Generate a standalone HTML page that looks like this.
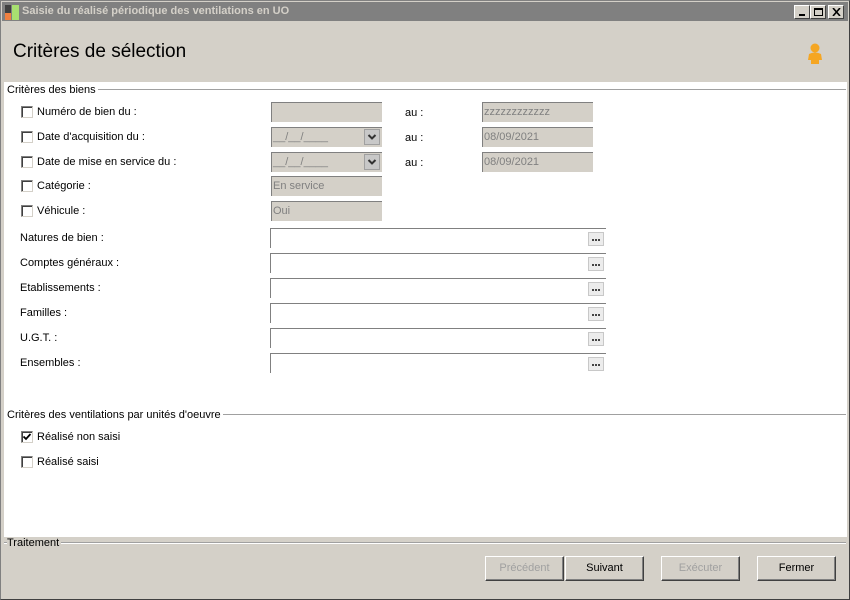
<!DOCTYPE html>
<html><head><meta charset="utf-8"><style>
*{box-sizing:border-box;margin:0;padding:0}
body{width:850px;height:600px;overflow:hidden;background:#d4d0c8;font-family:"Liberation Sans",sans-serif;font-size:11px;color:#000;position:relative}
.a{position:absolute}
.frame{left:0;top:0;width:850px;height:600px;border:1px solid #808080;border-right-color:#404040;border-bottom-color:#404040}
.tb{left:2px;top:2px;width:846px;height:19px;background:#808080;color:#d4d0c8;font-weight:bold;font-size:11px;line-height:19px;padding-left:20px}
.wb{top:5px;width:16px;height:14px;background:#d4d0c8;border:1px solid;border-color:#fff #404040 #404040 #fff}
.white{left:4px;top:82px;width:843px;height:455px;background:#fff}
.sec{font-size:11px;background:#fff;padding-right:2px}
.hl{height:2px;border-top:1px solid #a0a0a0;border-bottom:1px solid #fff}
.cb{width:12px;height:12px;border:1px solid #808080;border-right-color:#d4d0c8;border-bottom-color:#d4d0c8;background:#fff;box-shadow:inset 1px 1px 0 #404040}
.lbl{font-size:11px}
.in{height:20px;background:#d4d0c8;border-top:1px solid #808080;border-left:1px solid #808080;color:#808080;padding-left:1px;line-height:18px;font-size:11px}
.lk{height:20px;border-top:1px solid #808080;border-left:1px solid #808080;background:#fff}
.dots{width:16px;height:14px;border:1px solid #c8c8c8;background:#ececec}
.dots:after{content:"";position:absolute;left:3px;top:6px;width:2px;height:2px;background:#444;box-shadow:3px 0 0 #444,6px 0 0 #444}
.dd{width:16px;height:16px;background:#c8c8c8;border:1px solid #a0a0a0}
.btn{top:556px;width:79px;height:25px;background:#d4d0c8;border:1px solid;border-color:#fff #404040 #404040 #fff;box-shadow:inset -1px -1px 0 #808080;text-align:center;line-height:22px;font-size:11px}
</style></head><body>
<div class="a frame"></div>
<div class="a tb">Saisie du réalisé périodique des ventilations en UO</div>
<div class="a" style="left:5px;top:5px;width:6px;height:8px;background:#404040"></div>
<div class="a" style="left:5px;top:13px;width:6px;height:7px;background:#f08040"></div>
<div class="a" style="left:12px;top:5px;width:7px;height:15px;background:#a8e070"></div>
<div class="a wb" style="left:794px"><div class="a" style="left:4px;top:8px;width:6px;height:2px;background:#000"></div></div>
<div class="a wb" style="left:810px"><div class="a" style="left:3px;top:2px;width:9px;height:8px;border:1px solid #000;border-top-width:2px"></div></div>
<div class="a wb" style="left:828px"><svg class="a" style="left:3px;top:2px" width="9" height="8"><path d="M1 0 L8 8 M8 0 L1 8" stroke="#000" stroke-width="1.6"/></svg></div>
<div class="a" style="left:13px;top:41px;font-size:19px">Critères de sélection</div>
<svg class="a" style="left:806px;top:43px" width="18" height="22"><circle cx="9" cy="5" r="4.5" fill="#f5a623"/><path d="M3 11 Q9 8 15 11 L16 17 L13 17 L13 21 L5 21 L5 17 L2 17 Z" fill="#f5a623"/></svg>
<div class="a white"></div>
<div class="a hl" style="left:90px;top:89px;width:756px"></div>
<div class="a sec" style="left:7px;top:84px">Critères des biens</div>

<div class="a cb" style="left:21px;top:106px"></div><div class="a lbl" style="left:37px;top:106px">Numéro de bien du :</div>
<div class="a cb" style="left:21px;top:131px"></div><div class="a lbl" style="left:37px;top:131px">Date d'acquisition du :</div>
<div class="a cb" style="left:21px;top:156px"></div><div class="a lbl" style="left:37px;top:156px">Date de mise en service du :</div>
<div class="a cb" style="left:21px;top:180px"></div><div class="a lbl" style="left:37px;top:180px">Catégorie :</div>
<div class="a cb" style="left:21px;top:205px"></div><div class="a lbl" style="left:37px;top:205px">Véhicule :</div>

<div class="a in" style="left:271px;top:102px;width:111px"></div>
<div class="a in" style="left:271px;top:127px;width:111px">__/__/____</div><div class="a dd" style="left:364px;top:129px"><svg width="14" height="14"><path d="M3.5 5 L7 8.5 L10.5 5" stroke="#333" stroke-width="2" fill="none"/></svg></div>
<div class="a in" style="left:271px;top:152px;width:111px">__/__/____</div><div class="a dd" style="left:364px;top:154px"><svg width="14" height="14"><path d="M3.5 5 L7 8.5 L10.5 5" stroke="#333" stroke-width="2" fill="none"/></svg></div>
<div class="a in" style="left:271px;top:176px;width:111px">En service</div>
<div class="a in" style="left:271px;top:201px;width:111px">Oui</div>
<div class="a lbl" style="left:405px;top:107px">au :</div>
<div class="a lbl" style="left:405px;top:132px">au :</div>
<div class="a lbl" style="left:405px;top:157px">au :</div>
<div class="a in" style="left:482px;top:102px;width:111px">zzzzzzzzzzzz</div>
<div class="a in" style="left:482px;top:127px;width:111px">08/09/2021</div>
<div class="a in" style="left:482px;top:152px;width:111px">08/09/2021</div>

<div class="a lbl" style="left:20px;top:232px">Natures de bien :</div>
<div class="a lbl" style="left:20px;top:257px">Comptes généraux :</div>
<div class="a lbl" style="left:20px;top:282px">Etablissements :</div>
<div class="a lbl" style="left:20px;top:307px">Familles :</div>
<div class="a lbl" style="left:20px;top:332px">U.G.T. :</div>
<div class="a lbl" style="left:20px;top:357px">Ensembles :</div>
<div class="a lk" style="left:270px;top:228px;width:336px"></div><div class="a dots" style="left:588px;top:232px"></div>
<div class="a lk" style="left:270px;top:253px;width:336px"></div><div class="a dots" style="left:588px;top:257px"></div>
<div class="a lk" style="left:270px;top:278px;width:336px"></div><div class="a dots" style="left:588px;top:282px"></div>
<div class="a lk" style="left:270px;top:303px;width:336px"></div><div class="a dots" style="left:588px;top:307px"></div>
<div class="a lk" style="left:270px;top:328px;width:336px"></div><div class="a dots" style="left:588px;top:332px"></div>
<div class="a lk" style="left:270px;top:353px;width:336px"></div><div class="a dots" style="left:588px;top:357px"></div>

<div class="a hl" style="left:200px;top:414px;width:646px"></div>
<div class="a sec" style="left:7px;top:409px">Critères des ventilations par unités d'oeuvre</div>
<div class="a cb" style="left:21px;top:431px"></div>
<svg class="a" style="left:22px;top:432px" width="10" height="10"><path d="M1.5 4.5 L4 7 L8.5 2" stroke="#000" stroke-width="1.8" fill="none"/></svg>
<div class="a lbl" style="left:37px;top:431px">Réalisé non saisi</div>
<div class="a cb" style="left:21px;top:456px"></div><div class="a lbl" style="left:37px;top:456px">Réalisé saisi</div>

<div class="a hl" style="left:4px;top:542px;width:842px"></div>
<div class="a" style="left:7px;top:537px;background:#d4d0c8;padding-right:2px">Traitement</div>
<div class="a btn" style="left:485px;color:#a0a0a0">Précédent</div>
<div class="a btn" style="left:565px">Suivant</div>
<div class="a btn" style="left:661px;color:#a0a0a0">Exécuter</div>
<div class="a btn" style="left:757px">Fermer</div>
</body></html>
